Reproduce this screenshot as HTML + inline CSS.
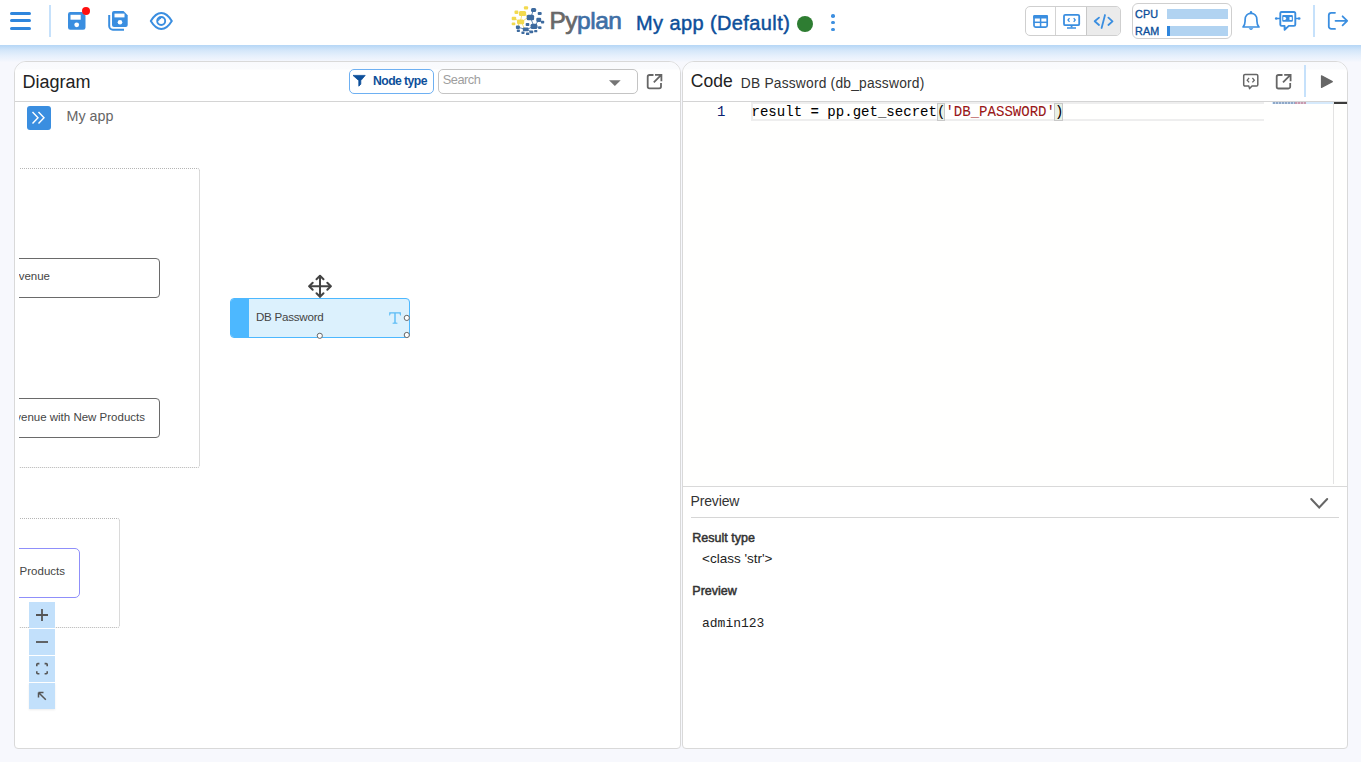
<!DOCTYPE html>
<html><head><meta charset="utf-8">
<style>
*{box-sizing:border-box;margin:0;padding:0}
html,body{width:1361px;height:762px;overflow:hidden;background:#f7f8fd;font-family:"Liberation Sans",sans-serif;position:relative}
.a{position:absolute}
.t{position:absolute;line-height:1;white-space:nowrap}
svg{position:absolute;overflow:visible}
</style></head><body>

<!-- header -->
<div class="a" style="left:0;top:0;width:1361px;height:45px;background:#fff"></div>
<div class="a" style="left:0;top:45px;width:1361px;height:17px;background:linear-gradient(#b5d6f6,#d3e6f9 30%,#e4effc 60%,#eff4fd 85%,#f6f8fd)"></div>

<!-- hamburger -->
<div class="a" style="left:10px;top:12px;width:21px;height:3px;border-radius:2px;background:#2f86dd"></div>
<div class="a" style="left:10px;top:19.2px;width:21px;height:3px;border-radius:2px;background:#2f86dd"></div>
<div class="a" style="left:10px;top:27px;width:21px;height:3px;border-radius:2px;background:#2f86dd"></div>
<div class="a" style="left:49px;top:5px;width:2px;height:32px;background:#c6e1fb"></div>

<!-- save -->
<svg style="left:0;top:0" width="1361" height="45">
 <path d="M70 12 H82 L85.5 15.5 V27.5 A2.3 2.3 0 0 1 83.2 29.8 H70.3 A2.3 2.3 0 0 1 68 27.5 V14.3 A2.3 2.3 0 0 1 70.3 12 Z" fill="#3a8ee0"/>
 <rect x="70.5" y="14.8" width="10.2" height="4.9" fill="#fff"/>
 <circle cx="76.7" cy="24.8" r="2.4" fill="#fff"/>
 <circle cx="86" cy="10.9" r="4" fill="#ff0f0f"/>
 <!-- save all -->
 <path d="M114 11 H123.5 L127.7 15.2 V25 A2 2 0 0 1 125.7 27 H114 A2 2 0 0 1 112 25 V13 A2 2 0 0 1 114 11 Z" fill="#3a8ee0"/>
 <rect x="114.5" y="13.6" width="10" height="3.8" fill="#fff"/>
 <circle cx="120" cy="22.2" r="2.3" fill="#fff"/>
 <path d="M109.2 15 V26 A3.7 3.7 0 0 0 112.9 29.7 H124" fill="none" stroke="#3a8ee0" stroke-width="2"/>
 <!-- eye -->
 <path d="M150.8 21 C154.3 15.2 157.7 13 161.3 13 C164.9 13 168.3 15.2 171.8 21 C168.3 26.8 164.9 29 161.3 29 C157.7 29 154.3 26.8 150.8 21 Z" fill="none" stroke="#3a8ee0" stroke-width="2" stroke-linejoin="round"/>
 <circle cx="161.2" cy="21" r="4" fill="none" stroke="#3a8ee0" stroke-width="1.9"/>
 <path d="M157.9 20.6 A3.3 3.3 0 0 1 160.9 17.6 L161.2 18.7 Q159.3 19.1 158.9 21 Z" fill="#3a8ee0"/>
</svg>

<!-- logo -->
<svg style="left:508px;top:3px" width="40" height="35" viewBox="0 0 40 35">
 <g stroke="#f2d94e" stroke-width="0.8">
  <line x1="14" y1="11" x2="12.5" y2="18"/><line x1="6" y1="15.5" x2="11" y2="18"/><line x1="17" y1="11" x2="20" y2="13.5"/><line x1="15" y1="18" x2="19" y2="15"/><line x1="11" y1="20" x2="10" y2="23.5"/><line x1="14" y1="20" x2="16" y2="25"/>
 </g>
 <g stroke="#3e6b9f" stroke-width="0.8">
  <line x1="25" y1="8" x2="23.5" y2="12.5"/><line x1="23" y1="16" x2="25" y2="21"/><line x1="30" y1="18" x2="27.5" y2="22"/><line x1="11" y1="24.5" x2="16" y2="26"/><line x1="20" y1="26" x2="24" y2="24"/><line x1="20" y1="27" x2="22.5" y2="28.5"/><line x1="28" y1="23.5" x2="31" y2="24.5"/><line x1="32" y1="17" x2="34" y2="19"/>
 </g>
 <g fill="#f2d94e">
  <rect x="15.9" y="3.3" width="4.2" height="3.1" rx="1"/>
  <rect x="6.5" y="7.6" width="3.8" height="3.4" rx="1"/>
  <rect x="10.9" y="7.9" width="7.2" height="5.1" rx="1.5"/>
  <rect x="3.7" y="13.8" width="4.5" height="3.4" rx="1"/>
  <rect x="9.0" y="16.4" width="7.2" height="4.9" rx="1.5"/>
  <rect x="3.7" y="19.6" width="3.6" height="2.6" rx="0.8"/>
 </g>
 <g fill="#3e6b9f">
  <rect x="23.0" y="4.9" width="5.2" height="4.2" rx="1.5"/>
  <rect x="29.7" y="9.0" width="4.0" height="3.1" rx="1"/>
  <rect x="18.7" y="11.8" width="7.4" height="5.4" rx="1.5"/>
  <rect x="28.3" y="14.8" width="4.9" height="4.2" rx="1.2"/>
  <rect x="32.9" y="17.7" width="3.3" height="2.9" rx="0.8"/>
  <rect x="17.7" y="20.0" width="3.6" height="3.1" rx="0.8"/>
  <rect x="22.6" y="20.7" width="6.7" height="5.2" rx="1.5"/>
  <rect x="30.1" y="23.3" width="3.4" height="2.8" rx="0.8"/>
  <rect x="7.9" y="22.6" width="4.0" height="3.5" rx="1"/>
  <rect x="14.8" y="24.6" width="5.8" height="3.6" rx="1"/>
  <rect x="8.8" y="26.5" width="3.1" height="2.4" rx="0.6"/>
  <rect x="21.4" y="27.4" width="3.8" height="2.9" rx="0.8"/>
  <rect x="26.2" y="26.9" width="3.1" height="2.4" rx="0.6"/>
  <rect x="13.4" y="28.5" width="3.1" height="2.4" rx="0.6"/>
  <rect x="18.0" y="29.5" width="3.3" height="2.6" rx="0.6"/>
 </g>
</svg>
<div class="t" style="left:549.5px;top:9px;font-size:24.5px;letter-spacing:-0.5px;-webkit-text-stroke:0.7px"><span style="color:#686868;-webkit-text-stroke-color:#686868">Py</span><span style="color:#3f6fa5;-webkit-text-stroke-color:#3f6fa5">plan</span></div>
<div class="t" style="left:636px;top:13px;font-size:20px;color:#0d4f9a;letter-spacing:0.4px;-webkit-text-stroke:0.45px #0d4f9a">My app (Default)</div>
<div class="a" style="left:796.5px;top:16px;width:16px;height:16px;border-radius:50%;background:#2e7d32"></div>
<div class="a" style="left:831.2px;top:14.4px;width:3.6px;height:3.6px;border-radius:50%;background:#3d8fe0"></div>
<div class="a" style="left:831.2px;top:20.8px;width:3.6px;height:3.6px;border-radius:50%;background:#3d8fe0"></div>
<div class="a" style="left:831.2px;top:27.8px;width:3.6px;height:3.6px;border-radius:50%;background:#3d8fe0"></div>


<!-- view buttons -->
<div class="a" style="left:1025px;top:6px;width:96px;height:30px;border:1px solid #cfcfcf;border-radius:5px;background:#fff;overflow:hidden">
 <div class="a" style="left:60px;top:0;width:35px;height:28px;background:#ebebeb"></div>
 <div class="a" style="left:29px;top:0;width:1px;height:28px;background:#d3d3d3"></div>
 <div class="a" style="left:60px;top:0;width:1px;height:28px;background:#c8c8c8"></div>
</div>
<svg style="left:0;top:0" width="1361" height="45">
 <!-- table -->
 <rect x="1034" y="15.8" width="13.2" height="11.4" rx="1.6" fill="none" stroke="#3a8ee0" stroke-width="1.7"/>
 <rect x="1033.2" y="15" width="14.8" height="3.4" rx="1.2" fill="#3a8ee0"/>
 <line x1="1033.5" y1="22.3" x2="1047.5" y2="22.3" stroke="#3a8ee0" stroke-width="1.5"/>
 <line x1="1040.6" y1="18" x2="1040.6" y2="27" stroke="#3a8ee0" stroke-width="1.5"/>
 <!-- monitor -->
 <rect x="1064" y="14.8" width="15.2" height="10.4" rx="1.3" fill="none" stroke="#3a8ee0" stroke-width="1.8"/>
 <line x1="1071.6" y1="25.5" x2="1071.6" y2="27.5" stroke="#3a8ee0" stroke-width="1.8"/>
 <line x1="1067" y1="28" x2="1076" y2="28" stroke="#3a8ee0" stroke-width="1.5"/>
 <path d="M1069.5 18.2 L1068 20 L1069.5 21.8 M1073.7 18.2 L1075.2 20 L1073.7 21.8" fill="none" stroke="#3a8ee0" stroke-width="1.3"/>
 <!-- code -->
 <path d="M1099 17.6 L1094.7 21.3 L1099 25 M1108.4 17.6 L1112.5 21.3 L1108.4 25 M1105 15 L1101.6 28" fill="none" stroke="#3a8ee0" stroke-width="1.8" stroke-linecap="round" stroke-linejoin="round"/>
 <!-- bell -->
 <path d="M1243 27 H1259 C1257.6 25.5 1256.9 23.5 1256.9 21 V19.8 C1256.9 16 1254.5 13.4 1251 13.4 C1247.5 13.4 1245.1 16 1245.1 19.8 V21 C1245.1 23.5 1244.4 25.5 1243 27 Z" fill="none" stroke="#3a8ee0" stroke-width="1.7" stroke-linejoin="round"/>
 <circle cx="1251" cy="12.3" r="1.2" fill="#3a8ee0"/>
 <path d="M1248.6 28.3 Q1251 31.6 1253.4 28.3 Z" fill="#3a8ee0"/>
 <!-- robot -->
 <path d="M1281.6 12 H1294 A1.3 1.3 0 0 1 1295.3 13.3 V24.6 A1.3 1.3 0 0 1 1294 25.9 H1288.8 L1284.6 29.8 V25.9 H1281.6 A1.3 1.3 0 0 1 1280.3 24.6 V13.3 A1.3 1.3 0 0 1 1281.6 12 Z" fill="none" stroke="#3a8ee0" stroke-width="1.9" stroke-linejoin="round"/>
 <rect x="1282.2" y="15.1" width="10.7" height="6.7" rx="1" fill="#3a8ee0"/>
 <path d="M1283.3 16.9 H1285.2 L1286.3 18.5 L1285.2 20.1 H1283.3 Z" fill="#fff"/>
 <rect x="1289.5" y="16.9" width="2.3" height="3.2" rx="0.6" fill="#fff"/>
 <line x1="1276.5" y1="18.5" x2="1280" y2="18.5" stroke="#3a8ee0" stroke-width="1.5"/>
 <line x1="1295.5" y1="18.5" x2="1299" y2="18.5" stroke="#3a8ee0" stroke-width="1.5"/>
 <circle cx="1276.2" cy="18.5" r="1.3" fill="#3a8ee0"/><circle cx="1299.2" cy="18.5" r="1.3" fill="#3a8ee0"/>
 <!-- logout -->
 <path d="M1335 12.8 H1331.3 A2.5 2.5 0 0 0 1328.8 15.3 V26.4 A2.5 2.5 0 0 0 1331.3 28.9 H1335" fill="none" stroke="#3a8ee0" stroke-width="1.8" stroke-linecap="round"/>
 <path d="M1335.5 20.8 H1347.2 M1342.6 16.3 L1347.2 20.8 L1342.6 25.3" fill="none" stroke="#3a8ee0" stroke-width="1.8" stroke-linecap="round" stroke-linejoin="round"/>
</svg>
<div class="a" style="left:1313px;top:5px;width:2px;height:32px;background:#c6e1fb"></div>

<!-- cpu ram -->
<div class="a" style="left:1132px;top:3px;width:100px;height:36px;border:1px solid #cfcfcf;border-radius:6px;background:#fff"></div>
<div class="t" style="left:1135px;top:8.6px;font-size:10.8px;color:#0d4f9a;-webkit-text-stroke:0.35px #0d4f9a;letter-spacing:0.1px">CPU</div>
<div class="t" style="left:1135px;top:25.6px;font-size:10.8px;color:#0d4f9a;-webkit-text-stroke:0.35px #0d4f9a;letter-spacing:0.1px">RAM</div>
<div class="a" style="left:1167px;top:9px;width:61px;height:10px;background:#b1d3f1"></div>
<div class="a" style="left:1167px;top:26px;width:61px;height:10px;background:#b1d3f1"></div>
<div class="a" style="left:1167px;top:26px;width:3.3px;height:10px;background:#2f86dd"></div>

<!-- panels -->
<div class="a" style="left:14px;top:61px;width:667px;height:688px;border:1px solid #d9d9d9;border-radius:12px 12px 4px 4px;background:#fff;overflow:hidden">
 <div class="a" style="left:0;top:0;width:667px;height:40px;background:linear-gradient(#f9fafd,#fafbfd 7px,#fff 8px)"></div>
 <div class="a" style="left:0;top:38.8px;width:667px;height:1.4px;background:#d4d4d4"></div>
</div>
<div class="a" style="left:682px;top:61px;width:666px;height:688px;border:1px solid #d9d9d9;border-radius:12px 12px 4px 4px;background:#fff;overflow:hidden">
 <div class="a" style="left:0;top:0;width:666px;height:40px;background:linear-gradient(#f9fafd,#fafbfd 7px,#fff 8px)"></div>
 <div class="a" style="left:0;top:38.8px;width:666px;height:1.4px;background:#d4d4d4"></div>
</div>

<!-- diagram header -->
<div class="t" style="left:22.5px;top:72.6px;font-size:18px;color:#222">Diagram</div>
<div class="a" style="left:349px;top:69px;width:85px;height:25px;border:1px solid #6eb0f2;border-radius:5px;background:#fff"></div>

<div class="t" style="left:373px;top:75px;font-size:12.2px;font-weight:bold;color:#0d4f9a;letter-spacing:-0.55px">Node type</div>
<div class="a" style="left:438px;top:69px;width:200px;height:25px;border:1px solid #c4c4c4;border-radius:5px;background:#fff"></div>
<div class="t" style="left:442.8px;top:74px;font-size:12.8px;color:#9e9e9e;letter-spacing:-0.5px">Search</div>
<svg style="left:0;top:0" width="700" height="100">
 <path d="M353 75.4 H365.2 L360.8 80.6 V84.2 L358.8 86.2 V80.6 Z" fill="#0d4f9a" stroke="#0d4f9a" stroke-width="0.8" stroke-linejoin="round"/>
 <path d="M609 80.2 H620.7 L614.85 86.1 Z" fill="#757575"/>
 <path d="M653.5 75 H649.5 A1.8 1.8 0 0 0 647.7 76.8 V86.5 A1.8 1.8 0 0 0 649.5 88.3 H659.2 A1.8 1.8 0 0 0 661 86.5 V83" fill="none" stroke="#666" stroke-width="1.8"/>
 <path d="M655 74.8 H661.4 V81.2 M661 75.2 L653.8 82.4" fill="none" stroke="#666" stroke-width="1.8"/>
</svg>

<!-- diagram body -->
<div class="a" style="left:27px;top:106px;width:24px;height:24px;border-radius:3px;background:#3a8ee0"></div>
<svg style="left:0;top:0" width="700" height="762">
 <path d="M32.5 112 L38 117.8 L32.5 123.6 M38.5 112 L44 117.8 L38.5 123.6" fill="none" stroke="#fff" stroke-width="1.4"/>
</svg>
<div class="t" style="left:66.5px;top:109.2px;font-size:14.3px;color:#666">My app</div>

<div class="a" style="left:19px;top:102px;width:661px;height:646px;overflow:hidden">
 <!-- group 1 -->
 <div class="a" style="left:-200px;top:66px;width:381px;height:300px;border:1px dotted #b5b5b5;border-radius:3px"></div>
 <div class="a" style="left:-200px;top:156px;width:341px;height:40px;border:1.2px solid #6a6a6a;border-radius:4px;background:#fff"></div>
 <div class="t" style="right:630px;top:169.2px;font-size:11.5px;color:#454545">Revenue</div>
 <div class="a" style="left:-200px;top:296px;width:341px;height:40px;border:1.2px solid #6a6a6a;border-radius:4px;background:#fff"></div>
 <div class="t" style="right:535px;top:309.5px;font-size:11.5px;color:#454545">Revenue with New Products</div>
 <!-- group 2 -->
 <div class="a" style="left:-200px;top:416px;width:301px;height:110px;border:1px dotted #b5b5b5;border-radius:3px"></div>
 <div class="a" style="left:-200px;top:446px;width:261px;height:50px;border:1.4px solid #8f8ffa;border-radius:5px;background:#fff"></div>
 <div class="t" style="right:615px;top:464.3px;font-size:11.5px;color:#454545">Products</div>
</div>

<!-- db node -->
<div class="a" style="left:230px;top:298px;width:180px;height:40px;border:1.5px solid #4db8ff;border-radius:4px;background:#dcf1fd;overflow:hidden">
 <div class="a" style="left:0;top:0;width:18px;height:40px;background:#4db8ff"></div>
</div>
<div class="t" style="left:256px;top:311.4px;font-size:11.6px;color:#444;letter-spacing:-0.25px">DB Password</div>
<svg style="left:0;top:0" width="700" height="400"><path d="M389.2 312.2 H400.9 V315.4 H400.1 L399.5 313.5 H395.7 V322.6 L397.4 322.8 V323.8 H392.6 V322.8 L394.3 322.6 V313.5 H390.6 L390 315.4 H389.2 Z" fill="#5bbcf5"/></svg>
<svg style="left:0;top:0" width="700" height="762">
 <g fill="#fff" stroke="#666" stroke-width="1">
  <circle cx="319.8" cy="335.8" r="2.6"/><circle cx="406.8" cy="317.9" r="2.6"/><circle cx="406.8" cy="335" r="2.6"/>
 </g>
 <!-- move cursor -->
 <g fill="none" stroke="#444" stroke-width="2" stroke-linecap="round" stroke-linejoin="round">
  <path d="M320 276 V296.5 M309.5 286.2 H330.5"/>
  <path d="M316.5 279.2 L320 275.7 L323.5 279.2 M316.5 293.3 L320 296.8 L323.5 293.3 M312.7 282.7 L309.2 286.2 L312.7 289.7 M327.3 282.7 L330.8 286.2 L327.3 289.7"/>
 </g>
</svg>

<!-- zoom controls -->
<div class="a" style="left:29px;top:602px;width:26px;height:26px;background:#c2e0fb"></div>
<div class="a" style="left:29px;top:629px;width:26px;height:26px;background:#c2e0fb"></div>
<div class="a" style="left:29px;top:656px;width:26px;height:26px;background:#c2e0fb"></div>
<div class="a" style="left:29px;top:683px;width:26px;height:26px;background:#c2e0fb;box-shadow:0 1px 2px rgba(0,0,0,0.08)"></div>
<svg style="left:0;top:0" width="700" height="762">
 <g fill="none" stroke="#555" stroke-width="1.8">
  <path d="M42 609 V621 M36 615 H48"/>
  <path d="M36 642 H48"/>
  <path d="M36.8 666.2 V664.6 Q36.8 663.6 37.8 663.6 H39.4 M44.6 663.6 H46.2 Q47.2 663.6 47.2 664.6 V666.2 M47.2 671.2 V672.8 Q47.2 673.8 46.2 673.8 H44.6 M39.4 673.8 H37.8 Q36.8 673.8 36.8 672.8 V671.2" stroke-width="1.6"/>
  <path d="M38.5 692.5 L45.8 699.8 M38.5 692.5 V697.5 M38.5 692.5 H43.5" stroke-width="1.5"/>
 </g>
</svg>

<!-- code header -->
<div class="t" style="left:690.8px;top:73.2px;font-size:17.5px;color:#222">Code</div>
<div class="t" style="left:740.8px;top:76.8px;font-size:13.8px;color:#333;letter-spacing:0.2px">DB Password (db_password)</div>
<svg style="left:0;top:0" width="1361" height="110">
 <path d="M1245 74.5 H1256.5 A1.3 1.3 0 0 1 1257.8 75.8 V84.7 A1.3 1.3 0 0 1 1256.5 86 H1252 L1249.6 88.6 L1248.8 86 H1245 A1.3 1.3 0 0 1 1243.7 84.7 V75.8 A1.3 1.3 0 0 1 1245 74.5 Z" fill="none" stroke="#666" stroke-width="1.5" stroke-linejoin="round"/>
 <path d="M1249.1 78 L1247.2 80.2 L1249.1 82.4 M1252.4 78 L1254.3 80.2 L1252.4 82.4" fill="none" stroke="#666" stroke-width="1.3"/>
 <path d="M1282.5 75 H1278.5 A1.8 1.8 0 0 0 1276.7 76.8 V86.7 A1.8 1.8 0 0 0 1278.5 88.5 H1288.4 A1.8 1.8 0 0 0 1290.2 86.7 V83" fill="none" stroke="#666" stroke-width="1.8"/>
 <path d="M1284.2 74.8 H1290.6 V81.2 M1290.2 75.2 L1283 82.4" fill="none" stroke="#666" stroke-width="1.8"/>
 <path d="M1321.5 75.8 L1332.3 81.6 L1321.5 87.4 Z" fill="#666" stroke="#666" stroke-width="1.2" stroke-linejoin="round"/>
</svg>
<div class="a" style="left:1304px;top:65px;width:2px;height:32px;background:#c6e1fb"></div>

<!-- editor -->
<div class="a" style="left:683px;top:102px;width:664px;height:384px;background:#fffffe;overflow:hidden">
 <div class="a" style="left:68px;top:-0.2px;width:513px;height:19.6px;border:2px solid #eeeeee;border-left:0;border-right:0"></div>
 <div class="a" style="left:68px;top:0;width:2px;height:19.4px;background:#eee"></div>
 <div class="t" style="left:34px;top:3px;font-family:'Liberation Mono',monospace;font-size:14px;color:#0b216f">1</div>
 <div class="a" style="left:253.5px;top:1px;width:8.5px;height:17.5px;background:#e9f1e6;border:1px solid #c8c8c8"></div>
 <div class="a" style="left:371px;top:1px;width:8.5px;height:17.5px;background:#e9f1e6;border:1px solid #c8c8c8"></div>
 <div class="t" style="left:68.5px;top:3px;font-family:'Liberation Mono',monospace;font-size:14.05px;color:#000;-webkit-text-stroke:0.05px #000">result = pp.get_secret(<span style="color:#a31515">'DB_PASSWORD'</span>)</div>
 <!-- minimap -->
 <div class="a" style="left:589px;top:0;width:61px;height:2px;background:#d6eafc"></div>
 <div class="a" style="left:589.5px;top:0.2px;width:22px;height:1.4px;background:repeating-linear-gradient(90deg,#8fa8c8 0 2px,#c5d6ea 2px 3px)"></div>
 <div class="a" style="left:612px;top:0.2px;width:11px;height:1.4px;background:repeating-linear-gradient(90deg,#c79aae 0 2px,#dcc6d6 2px 3px)"></div>
 <div class="a" style="left:650px;top:0;width:1px;height:382px;background:#e3e3e3"></div>
 <div class="a" style="left:651px;top:0;width:13px;height:2px;background:#3b3b3b"></div>
</div>
<div class="a" style="left:683px;top:486px;width:664px;height:1px;background:#d9d9d9"></div>

<!-- preview -->
<div class="t" style="left:690.5px;top:493.7px;font-size:14px;color:#333;letter-spacing:-0.15px">Preview</div>
<svg style="left:0;top:0" width="1361" height="762">
 <path d="M1311.2 499 L1319.2 507.5 L1327.2 499" fill="none" stroke="#666" stroke-width="2" stroke-linecap="round"/>
</svg>
<div class="a" style="left:691px;top:517px;width:648px;height:1.3px;background:#d6d6d6"></div>
<div class="t" style="left:692.3px;top:532.3px;font-size:12.5px;color:#333;letter-spacing:0px;-webkit-text-stroke:0.5px #333">Result type</div>
<div class="t" style="left:702px;top:551.8px;font-size:13.5px;color:#222;letter-spacing:0px">&lt;class 'str'&gt;</div>
<div class="t" style="left:692.3px;top:585.2px;font-size:12.5px;color:#333;letter-spacing:0px;-webkit-text-stroke:0.5px #333">Preview</div>
<div class="t" style="left:702px;top:617px;font-family:'Liberation Mono',monospace;font-size:13px;color:#222">admin123</div>
</body></html>
